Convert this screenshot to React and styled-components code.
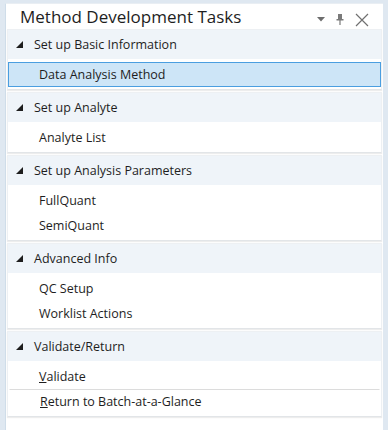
import React from 'react';
import styled, { createGlobalStyle } from 'styled-components';

const groups = [
  { title: 'Set up Basic Information', items: [{ label: 'Data Analysis Method', selected: true }] },
  { title: 'Set up Analyte', items: [{ label: 'Analyte List' }] },
  { title: 'Set up Analysis Parameters', items: [{ label: 'FullQuant' }, { label: 'SemiQuant' }] },
  { title: 'Advanced Info', items: [{ label: 'QC Setup' }, { label: 'Worklist Actions' }] },
  {
    title: 'Validate/Return',
    divided: true,
    items: [
      { label: 'alidate', key: 'V' },
      { label: 'eturn to Batch-at-a-Glance', key: 'R' },
    ],
  },
];

const App = () => (
  <>
    <GlobalStyle />
    <Panel>
      <TitleBar>
        <Title>Method Development Tasks</Title>
        <TitleIcons>
          <svg width="8" height="5" viewBox="0 0 8 5">
            <path d="M0 0H8L4 4.5Z" fill="#6d6d6d" />
          </svg>
          <svg width="8" height="11" viewBox="0 0 8 11">
            <path d="M2 0H6V5H7.5V6.5H4.6V11H3.4V6.5H0.5V5H2Z" fill="#7a7a7a" />
          </svg>
          <svg width="14" height="14" viewBox="0 0 14 14">
            <path d="M1 1L13 13M13 1L1 13" stroke="#707070" strokeWidth="1.2" fill="none" />
          </svg>
        </TitleIcons>
      </TitleBar>
      <List>
        {groups.map((g) => (
          <Group key={g.title}>
            <Header>
              <svg width="7" height="7" viewBox="0 0 7 7">
                <path d="M7 0V7H0Z" fill="#1e1e1e" />
              </svg>
              <span>{g.title}</span>
            </Header>
            <Items>
              {g.items.map((it, i) => (
                <Item key={i} $selected={it.selected} $divided={g.divided && i > 0}>
                  {it.key && <u>{it.key}</u>}
                  {it.label}
                </Item>
              ))}
            </Items>
          </Group>
        ))}
      </List>
    </Panel>
  </>
);

const GlobalStyle = createGlobalStyle`
  html, body {
    margin: 0;
    padding: 0;
    background: #dfe8f1;
  }
  body {
    font-family: "Open Sans", "Noto Sans", "Liberation Sans", sans-serif;
    color: #1e1e1e;
  }
`;

const Panel = styled.div`
  margin: 3px 5px 0 5px;
  height: 427px;
  background: #ffffff;
  border-left: 1px solid #cfdde9;
  border-top: 1px solid #e9eef3;
  box-sizing: border-box;
  overflow: hidden;
`;

const TitleBar = styled.div`
  height: 25px;
  display: flex;
  align-items: center;
  justify-content: space-between;
  padding: 0 14px 0 14px;
`;

const Title = styled.div`
  font-size: 17px;
  color: #1e1e1e;
`;

const TitleIcons = styled.div`
  display: flex;
  align-items: center;
  gap: 11px;
  padding-top: 6px;
`;

const List = styled.div`
  padding: 0 1px;
  display: flex;
  flex-direction: column;
  gap: 2px;
`;

const Group = styled.div`
  background: #ffffff;
  border: 1px solid #edf0f3;
  border-bottom: 1px solid #e2e5e8;
  box-shadow: 0 1px 1px rgba(0, 0, 0, 0.07);
`;

const Header = styled.div`
  height: 29px;
  display: flex;
  align-items: center;
  gap: 11px;
  padding-left: 8px;
  background: #eff4f9;
  font-size: 12.5px;
`;

const Items = styled.div`
  display: flex;
  flex-direction: column;
  padding: 3px 0 2px;
`;

const Item = styled.div`
  height: 25px;
  display: flex;
  align-items: center;
  padding-left: 30px;
  font-size: 12.5px;
  box-sizing: border-box;
  border: 1px solid ${(p) => (p.$selected ? '#4a9ee0' : 'transparent')};
  background: ${(p) => (p.$selected ? '#cde5f7' : 'transparent')};
  ${(p) => p.$divided && 'border-top: 1px solid #dcdcdc; margin: 0 1px;'}
`;

export default App;
